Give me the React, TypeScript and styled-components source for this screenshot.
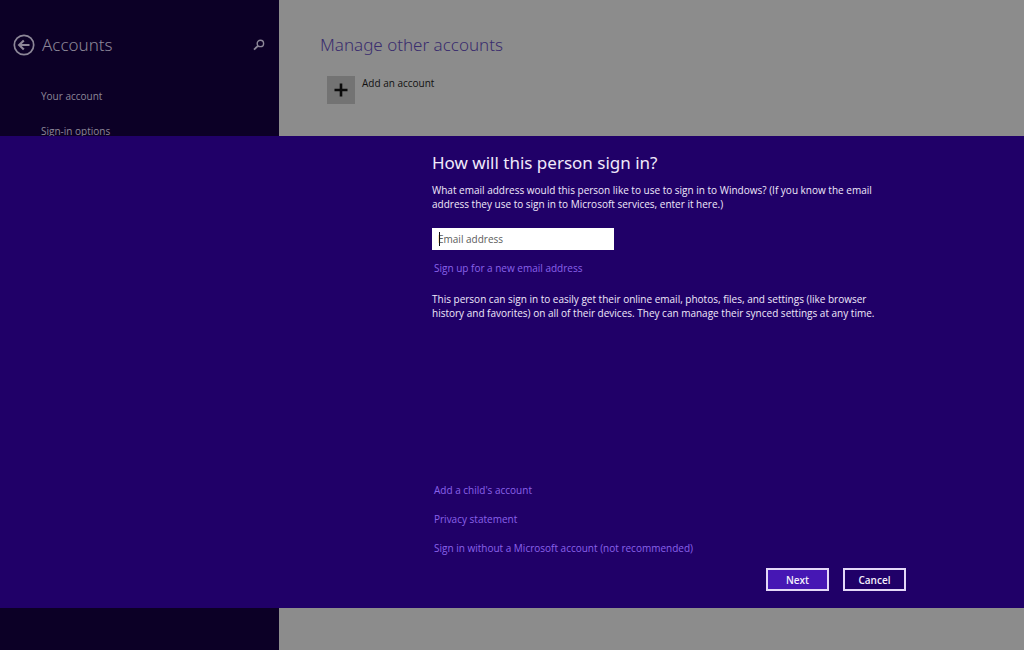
import React from "react";
import styled, { createGlobalStyle } from "styled-components";

const GlobalStyle = createGlobalStyle`
  *, *::before, *::after { box-sizing: border-box; }
  body {
    margin: 0;
    font-family: "Open Sans", "Noto Sans", sans-serif;
    font-size: 10px;
    line-height: 14px;
    overflow: hidden;
  }
  h1, h2, p, ul { margin: 0; padding: 0; }
  button, input { font: inherit; border-radius: 0; }
`;

const Screen = styled.div`
  display: grid;
  grid-template-columns: 279px 1fr;
  min-height: 100vh;
  background: #8c8c8c;
`;

const Sidebar = styled.aside`
  padding: 30px 14px 0 13px;
  background: #0c0026;
  color: #8d8798;
`;

const SidebarHeader = styled.header`
  display: flex;
  align-items: center;
  height: 29px;
`;

const IconButton = styled.button`
  display: flex;
  padding: 0;
  border: 0;
  background: none;
  color: inherit;
`;

const Title = styled.h1<{ $color?: string }>`
  flex: 1;
  font-family: "Noto Sans", "Open Sans", sans-serif;
  font-size: 17px;
  line-height: 30px;
  font-weight: 300;
  color: ${(p) => p.$color ?? "inherit"};
`;

const SidebarTitle = styled(Title)`
  margin-left: 7px;
`;

const NavList = styled.ul`
  display: flex;
  flex-direction: column;
  gap: 21px;
  padding: 30px 0 0 28px;
  list-style: none;
`;

const NavLink = styled.a`
  color: inherit;
  text-decoration: none;
`;

const Main = styled.main`
  padding: 30px 41px 0;
`;

const AddAccount = styled.button`
  display: flex;
  align-items: flex-start;
  gap: 7px;
  margin: 16px 0 0 7px;
  padding: 0;
  border: 0;
  background: none;
  color: #111111;
`;

const AddTile = styled.span`
  display: grid;
  place-items: center;
  width: 28px;
  height: 28px;
  background: #737373;
`;

const Overlay = styled.div`
  position: fixed;
  inset: 0;
  display: flex;
  padding: 136px 0 42px;
`;

const Dialog = styled.form`
  flex: 1;
  display: grid;
  grid-template-columns: minmax(0, 432px) minmax(0, 474px);
  background: #200068;
  color: #f0e9fb;
`;

const DialogBody = styled.div`
  grid-column: 2;
  display: flex;
  flex-direction: column;
  padding: 12px 0 17px;
`;

const DialogTitle = styled(Title)`
  flex: none;
  font-weight: 400;
  margin-bottom: 5px;
`;

const EmailField = styled.div`
  position: relative;
  width: 182px;
  margin: 17px 0 11px;
`;

const Caret = styled.span`
  position: absolute;
  left: 7px;
  top: 4px;
  width: 1px;
  height: 14px;
  background: #111111;
`;

const EmailInput = styled.input`
  display: block;
  width: 100%;
  height: 22px;
  padding: 0 6px;
  border: 0;
  outline: 0;
  background: #ffffff;
  color: #222222;
  caret-color: transparent;

  &::placeholder {
    color: #5c5c5c;
    opacity: 1;
  }
`;

const Link = styled.a`
  align-self: flex-start;
  margin-left: 2px;
  color: #8a62ea;
  text-decoration: none;
`;

const Details = styled.p`
  margin-top: 17px;
`;

const LinkGroup = styled.nav`
  display: flex;
  flex-direction: column;
  gap: 15px;
  margin-top: auto;
`;

const Actions = styled.div`
  display: flex;
  justify-content: flex-end;
  gap: 14px;
  margin-top: 13px;
`;

const ActionButton = styled.button<{ $primary?: boolean }>`
  width: 63px;
  height: 23px;
  padding: 0;
  border: 2px solid #e4d8f8;
  background: ${(p) => (p.$primary ? "#4617b4" : "transparent")};
  color: #f4effc;
  font-weight: 600;
`;

const BackIcon = () => (
  <svg width="22" height="22" viewBox="0 0 22 22" fill="none" stroke="currentColor" aria-hidden="true">
    <circle cx="11" cy="11" r="9.7" strokeWidth="1.7" />
    <path d="M16.5 11H6.5M10.8 6.5L6.2 11l4.6 4.5" strokeWidth="2.2" />
  </svg>
);

const SearchIcon = () => (
  <svg width="12" height="12" viewBox="0 0 12 12" fill="none" stroke="currentColor" aria-hidden="true">
    <circle cx="7.4" cy="4.4" r="3.2" strokeWidth="1.4" />
    <path d="M5 6.8L1 10.6" strokeWidth="1.8" />
  </svg>
);

const PlusIcon = () => (
  <svg width="14" height="14" viewBox="0 0 14 14" stroke="#0a0a0a" strokeWidth="2.6" aria-hidden="true">
    <path d="M7 0.5v13M0.5 7h13" />
  </svg>
);

export default function App() {
  return (
    <>
      <GlobalStyle />
      <Screen>
        <Sidebar>
          <SidebarHeader>
            <IconButton type="button" aria-label="Back">
              <BackIcon />
            </IconButton>
            <SidebarTitle>Accounts</SidebarTitle>
            <IconButton type="button" aria-label="Search">
              <SearchIcon />
            </IconButton>
          </SidebarHeader>
          <NavList>
            <li>
              <NavLink href="#your-account">Your account</NavLink>
            </li>
            <li>
              <NavLink href="#sign-in-options">Sign-in options</NavLink>
            </li>
          </NavList>
        </Sidebar>
        <Main>
          <Title as="h2" $color="#3a2d6e">Manage other accounts</Title>
          <AddAccount type="button">
            <AddTile>
              <PlusIcon />
            </AddTile>
            Add an account
          </AddAccount>
        </Main>
      </Screen>
      <Overlay>
        <Dialog role="dialog" aria-labelledby="dialog-title" onSubmit={(e) => e.preventDefault()}>
          <DialogBody>
            <DialogTitle as="h2" id="dialog-title">How will this person sign in?</DialogTitle>
            <p>
              What email address would this person like to use to sign in to Windows? (If you know the email
              <br />
              address they use to sign in to Microsoft services, enter it here.)
            </p>
            <EmailField>
              <EmailInput type="email" aria-label="Email address" placeholder="Email address" />
              <Caret aria-hidden="true" />
            </EmailField>
            <Link href="#sign-up">Sign up for a new email address</Link>
            <Details>
              This person can sign in to easily get their online email, photos, files, and settings (like browser
              <br />
              history and favorites) on all of their devices. They can manage their synced settings at any time.
            </Details>
            <LinkGroup aria-label="Other options">
              <Link href="#child">Add a child's account</Link>
              <Link href="#privacy">Privacy statement</Link>
              <Link href="#local">Sign in without a Microsoft account (not recommended)</Link>
            </LinkGroup>
            <Actions>
              <ActionButton type="submit" $primary>Next</ActionButton>
              <ActionButton type="button">Cancel</ActionButton>
            </Actions>
          </DialogBody>
        </Dialog>
      </Overlay>
    </>
  );
}
